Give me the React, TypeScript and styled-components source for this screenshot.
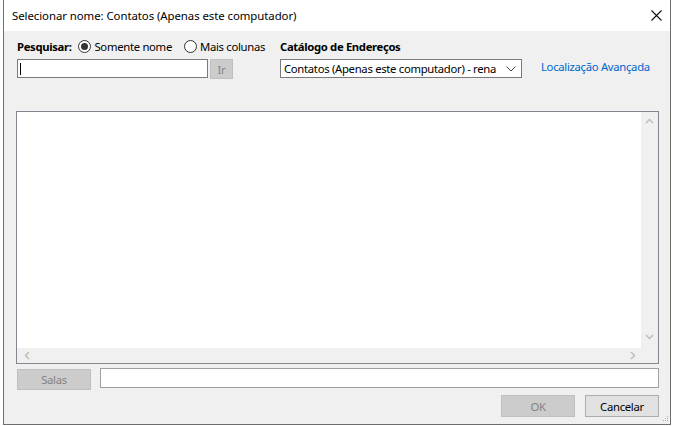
import React from "react";
import styled, { createGlobalStyle } from "styled-components";

const GlobalStyle = createGlobalStyle`
  html, body {
    margin: 0;
    padding: 0;
    background: #ffffff;
    font-family: "Noto Sans", "Open Sans", sans-serif;
    font-size: 11.3px;
    color: #000000;
  }
  * { box-sizing: border-box; }
`;

const Backdrop = styled.div`
  width: 674px;
  height: 426px;
  background: #ffffff;
  padding-left: 3px;
`;

const Dialog = styled.div`
  position: relative;
  width: 668px;
  height: 425px;
  display: flex;
  flex-direction: column;
  border: 1px solid #6f6f6f;
  border-top: none;
  background: #f0f0f0;
`;

const TitleBar = styled.div`
  height: 31px;
  flex-shrink: 0;
  background: #ffffff;
  display: flex;
  align-items: center;
  justify-content: space-between;
  padding: 0 4px 0 8px;
`;

const Title = styled.span`
  font-size: 11.4px;
  line-height: 16px;
  letter-spacing: -0.06px;
`;

const CloseButton = styled.div`
  width: 20px;
  height: 20px;
  display: flex;
  align-items: center;
  justify-content: center;
`;

const Body = styled.div`
  flex: 1;
  display: flex;
  flex-direction: column;
  padding: 7px 11px 0 12px;
  letter-spacing: -0.3px;
`;

const SearchRow = styled.div`
  display: flex;
  align-items: flex-start;
  padding-left: 1px;
`;

const Column = styled.div<{ $width: number }>`
  width: ${({ $width }) => $width}px;
  flex-shrink: 0;
  display: flex;
  flex-direction: column;
  gap: 5px;
`;

const LabelLine = styled.div`
  height: 16px;
  display: flex;
  align-items: center;
  gap: 7px;
  white-space: nowrap;
`;

const Bold = styled.span`
  font-weight: 700;
  letter-spacing: -0.35px;
`;

const RadioLabel = styled.label`
  display: flex;
  align-items: center;
  gap: 3px;
  margin-right: 5px;
`;

const RadioCircle = styled.span<{ $checked?: boolean }>`
  width: 13px;
  height: 13px;
  border-radius: 50%;
  border: 1px solid #333333;
  background: #ffffff;
  display: flex;
  align-items: center;
  justify-content: center;
  &::after {
    content: "";
    width: 7px;
    height: 7px;
    border-radius: 50%;
    background: ${({ $checked }) => ($checked ? "#333333" : "transparent")};
  }
`;

const InputLine = styled.div`
  display: flex;
  gap: 2px;
  height: 19px;
`;

const SearchBox = styled.div`
  width: 191px;
  height: 19px;
  background: #ffffff;
  border: 1px solid #7a7a7a;
  display: flex;
  align-items: center;
  padding-left: 2px;
`;

const Caret = styled.span`
  width: 1px;
  height: 12px;
  background: #000000;
`;

const DisabledButton = styled.div<{ $width: number; $height: number }>`
  width: ${({ $width }) => $width}px;
  height: ${({ $height }) => $height}px;
  flex-shrink: 0;
  background: #cccccc;
  border: 1px solid #bfbfbf;
  color: #838383;
  display: flex;
  align-items: center;
  justify-content: center;
`;

const Button = styled.div`
  width: 74px;
  height: 22px;
  background: #e1e1e1;
  border: 1px solid #adadad;
  display: flex;
  align-items: center;
  justify-content: center;
`;

const Select = styled.div`
  width: 242px;
  height: 19px;
  background: #ffffff;
  border: 1px solid #7a7a7a;
  display: flex;
  align-items: center;
  justify-content: space-between;
  padding: 0 5px 0 3px;
  white-space: nowrap;
  overflow: hidden;
`;

const LinkCol = styled.div`
  padding-top: 21px;
  margin-left: 19px;
`;

const Link = styled.span`
  color: #0066cc;
  white-space: nowrap;
`;

const ListBox = styled.div`
  margin-top: 33px;
  width: 643px;
  height: 253px;
  border: 1px solid #828790;
  display: grid;
  grid-template-columns: 1fr 17px;
  grid-template-rows: 1fr 15px;
`;

const ListArea = styled.div`
  background: #ffffff;
`;

const VScroll = styled.div`
  grid-row: 1 / 3;
  grid-column: 2;
  background: #f0f0f0;
  display: flex;
  flex-direction: column;
  justify-content: space-between;
  align-items: center;
  padding: 6px 0 23px;
`;

const HScroll = styled.div`
  background: #f0f0f0;
  display: flex;
  justify-content: space-between;
  align-items: center;
  padding: 0 5px 0 7px;
`;

const BottomRow = styled.div`
  margin-top: 5px;
  display: flex;
  align-items: flex-start;
  gap: 9px;
  padding-left: 1px;
`;

const RoomBox = styled.div`
  margin-top: -1px;
  width: 559px;
  height: 20px;
  background: #ffffff;
  border: 1px solid #a0a0a0;
`;

const ActionRow = styled.div`
  margin-top: 5px;
  display: flex;
  justify-content: flex-end;
  gap: 10px;
`;

const Grip = styled.div`
  position: absolute;
  right: 1px;
  bottom: 2px;
  width: 6px;
  height: 6px;
  display: flex;
`;

const Arrow = ({ dir }: { dir: "up" | "down" | "left" | "right" }) => {
  const d = {
    up: "M1 5 L4.5 1.5 L8 5",
    down: "M1 1 L4.5 4.5 L8 1",
    left: "M5 1 L1.5 4.5 L5 8",
    right: "M1 1 L4.5 4.5 L1 8",
  }[dir];
  const vertical = dir === "up" || dir === "down";
  return (
    <svg width={vertical ? 9 : 6} height={vertical ? 6 : 9} viewBox={vertical ? "0 0 9 6" : "0 0 6 9"}>
      <path d={d} fill="none" stroke="#bdbdbd" strokeWidth="1.5" />
    </svg>
  );
};

export default function App() {
  return (
    <>
      <GlobalStyle />
      <Backdrop>
        <Dialog>
          <TitleBar>
            <Title>Selecionar nome: Contatos (Apenas este computador)</Title>
            <CloseButton>
              <svg width="11" height="11" viewBox="0 0 11 11">
                <path d="M0.5 0.5 L10.5 10.5 M10.5 0.5 L0.5 10.5" stroke="#111" strokeWidth="1.1" />
              </svg>
            </CloseButton>
          </TitleBar>
          <Body>
            <SearchRow>
              <Column $width={263}>
                <LabelLine>
                  <Bold>Pesquisar:</Bold>
                  <RadioLabel>
                    <RadioCircle $checked />
                    Somente nome
                  </RadioLabel>
                  <RadioLabel>
                    <RadioCircle />
                    Mais colunas
                  </RadioLabel>
                </LabelLine>
                <InputLine>
                  <SearchBox>
                    <Caret />
                  </SearchBox>
                  <DisabledButton $width={23} $height={20}>Ir</DisabledButton>
                </InputLine>
              </Column>
              <Column $width={242}>
                <LabelLine>
                  <Bold>Catálogo de Endereços</Bold>
                </LabelLine>
                <Select>
                  <span>Contatos (Apenas este computador) - rena</span>
                  <svg width="10" height="6" viewBox="0 0 10 6">
                    <path d="M0.5 0.5 L5 5 L9.5 0.5" fill="none" stroke="#444" strokeWidth="1" />
                  </svg>
                </Select>
              </Column>
              <LinkCol>
                <Link>Localização Avançada</Link>
              </LinkCol>
            </SearchRow>
            <ListBox>
              <ListArea />
              <VScroll>
                <Arrow dir="up" />
                <Arrow dir="down" />
              </VScroll>
              <HScroll>
                <Arrow dir="left" />
                <Arrow dir="right" />
              </HScroll>
            </ListBox>
            <BottomRow>
              <DisabledButton $width={74} $height={21}>Salas</DisabledButton>
              <RoomBox />
            </BottomRow>
            <ActionRow>
              <DisabledButton $width={74} $height={22}>OK</DisabledButton>
              <Button>Cancelar</Button>
            </ActionRow>
          </Body>
          <Grip>
            <svg width="6" height="6" viewBox="0 0 6 6">
              <rect x="4" y="0" width="1" height="1" fill="#b0b0b0" />
              <rect x="2" y="2" width="1" height="1" fill="#b0b0b0" />
              <rect x="4" y="2" width="1" height="1" fill="#b0b0b0" />
              <rect x="0" y="4" width="1" height="1" fill="#b0b0b0" />
              <rect x="2" y="4" width="1" height="1" fill="#b0b0b0" />
              <rect x="4" y="4" width="1" height="1" fill="#b0b0b0" />
            </svg>
          </Grip>
        </Dialog>
      </Backdrop>
    </>
  );
}
